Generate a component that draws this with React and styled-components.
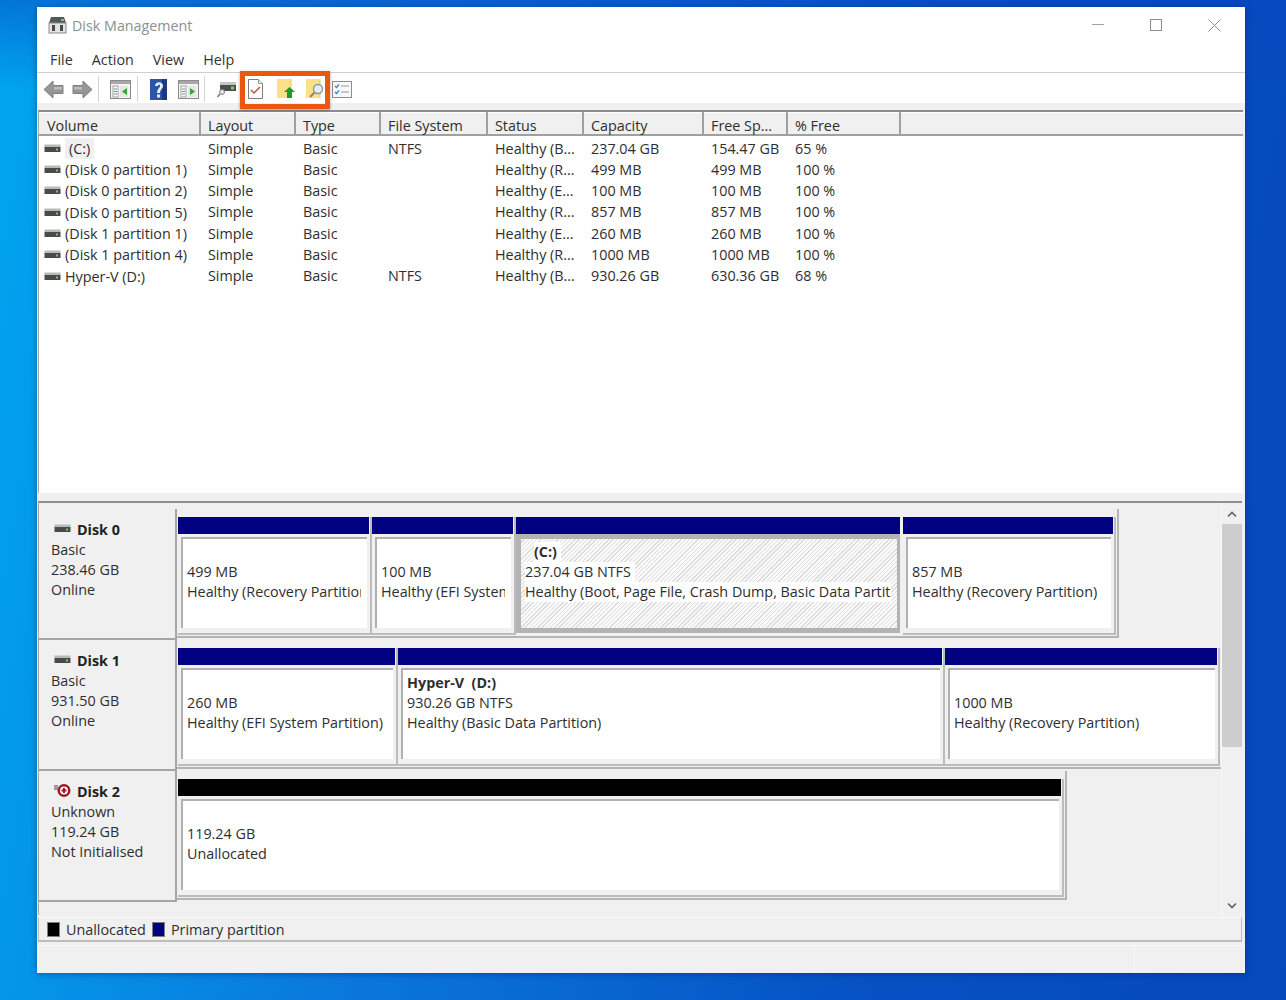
import React from 'react';
import styled, { createGlobalStyle } from 'styled-components';

const GlobalStyle = createGlobalStyle`
  html, body { margin: 0; padding: 0; }
  body { font-family: "Open Sans", "Noto Sans", "Liberation Sans", sans-serif; }
`;

const COLUMNS = '162px 95px 85px 107px 96px 120px 84px 113px';

const Desktop = styled.div`
  box-sizing: border-box;
  width: 1286px;
  height: 1000px;
  padding: 7px 41px 27px 37px;
  overflow: hidden;
  background:
    linear-gradient(180deg, rgba(5, 70, 190, 0.5) 0, rgba(5, 70, 190, 0) 90px),
    linear-gradient(100deg, #00a6f0 0%, #0a78dc 35%, #0552c4 70%, #0548bb 100%);
`;

const Window = styled.div`
  width: 1208px;
  height: 966px;
  display: flex;
  flex-direction: column;
  background: #f0f0f0;
  color: #2e2e2e;
  font-size: 14.35px;
  box-shadow: 0 1px 6px rgba(0, 30, 90, 0.45);
`;

const TitleBar = styled.div`
  height: 36px;
  flex: none;
  display: flex;
  align-items: center;
  padding-left: 11px;
  background: #fff;
`;

const Title = styled.span`
  margin-left: 5px;
  font-size: 14.3px;
  color: #8b9094;
`;

const WindowButtons = styled.div`
  margin-left: auto;
  display: flex;
  align-items: center;
  padding-right: 24px;
  gap: 46px;
`;

const MenuBar = styled.div`
  height: 26px;
  padding-top: 3px;
  flex: none;
  display: flex;
  align-items: center;
  background: #fff;
  border-bottom: 1px solid #cfcfcf;
  padding-left: 13px;
`;

const MenuItem = styled.span`
  margin-right: 19px;
  color: #333;
`;

const Toolbar = styled.div`
  position: relative;
  box-sizing: border-box;
  height: 30px;
  flex: none;
  display: flex;
  align-items: center;
  background: #fff;
  padding: 2px 0 0 6px;
`;

const ToolSlot = styled.span`
  display: flex;
  margin-left: ${({ $gap }) => $gap}px;
`;

const ToolSep = styled.span`
  width: 1px;
  height: 26px;
  background: #d4d4d4;
  margin-left: ${({ $gap }) => $gap}px;
`;

const Highlight = styled.div`
  position: absolute;
  left: 203px;
  top: -2px;
  width: 90px;
  height: 38px;
  box-sizing: border-box;
  border: 5px solid #e8590f;
  box-shadow: 0 1px 3px rgba(0, 0, 0, 0.35);
`;

const ToolStrip = styled.div`
  height: 7px;
  flex: none;
  background: #f1f0f0;
`;

const VolumePane = styled.div`
  box-sizing: border-box;
  height: 383px;
  flex: none;
  margin: 0 2px 0 1px;
  display: flex;
  flex-direction: column;
  background: #fff;
  border-top: 2px solid #8c8c8c;
  border-left: 1px solid #a8a8a8;
`;

const HeaderRow = styled.div`
  display: grid;
  grid-template-columns: ${COLUMNS};
  height: 22px;
  flex: none;
  background: #f0f0f0;
  border-bottom: 2px solid #a0a0a0;
  box-shadow: inset 0 1px 0 #fff;
`;

const HeaderCell = styled.div`
  padding: 5px 0 0 7px;
  border-right: 2px solid #a0a0a0;
  line-height: 18px;
  white-space: nowrap;

  &:first-child {
    padding-left: 8px;
  }
`;

const VolumeList = styled.div`
  flex: 1;
  padding-top: 1.5px;
`;

const VolumeRow = styled.div`
  display: grid;
  grid-template-columns: ${COLUMNS};
  height: 21.33px;
  line-height: 21px;
`;

const VolumeCell = styled.div`
  padding-left: 7px;
  white-space: nowrap;
`;

const VolumeName = styled.div`
  display: flex;
  align-items: center;
  white-space: nowrap;
  padding-left: 5px;
`;

const VolumeLabel = styled.span`
  margin-left: 4px;
  padding: 0 ${({ $selected }) => ($selected ? '4px' : '0')};
  background: ${({ $selected }) => ($selected ? '#f0f0f0' : 'transparent')};
`;

const PaneGap = styled.div`
  height: 8px;
  flex: none;
`;

const DiskPane = styled.div`
  box-sizing: border-box;
  flex: none;
  height: 414px;
  display: flex;
  margin-left: 1px;
  margin-right: 3px;
  border-top: 2px solid #8f8f8f;
  border-left: 1px solid #a8a8a8;
`;

const DiskList = styled.div`
  flex: 1;
  min-width: 0;
  overflow: hidden;
  padding-top: 6px;
`;

const DiskRow = styled.div`
  display: flex;
  height: 131px;
`;

const DiskInfo = styled.div`
  box-sizing: border-box;
  width: 138px;
  flex: none;
  padding: 11px 0 0 12px;
  line-height: 20px;
  border-right: 2px solid #a6a6a6;
  border-bottom: 2px solid #a6a6a6;
`;

const DiskName = styled.div`
  display: flex;
  align-items: center;
  font-weight: 700;
  color: #222;
`;

const DiskIconSlot = styled.span`
  display: flex;
  width: 26px;
  margin-top: -4px;
  padding-left: 3px;
  box-sizing: border-box;
`;

const DiskMap = styled.div`
  display: flex;
  flex: none;
  height: 118px;
  padding: 8px 1px 1px 1px;
  border-right: 2px solid #b4b4b4;
  border-bottom: 2px solid #b4b4b4;
`;

const Partition = styled.div`
  box-sizing: border-box;
  flex: none;
  width: ${({ $w }) => $w}px;
  height: 118px;
  display: flex;
  flex-direction: column;
  border-right: 2px solid #bcbcbc;
  border-bottom: 2px solid #bcbcbc;
`;

const SelectedPartition = styled.div`
  box-sizing: border-box;
  flex: none;
  width: ${({ $w }) => $w}px;
  height: 116px;
  display: flex;
  flex-direction: column;
  padding-right: 3px;
`;

const PartitionBar = styled.div`
  height: 17px;
  flex: none;
  margin-right: 1px;
  background: ${({ $color }) => $color};
`;

const SelectedBar = styled.div`
  height: 17px;
  flex: none;
  background: #000080;
`;

const PartitionBody = styled.div`
  flex: 1;
  min-height: 0;
  margin: 3px 3px 5px 3px;
  padding: 3px 6px 0 4px;
  background: #fff;
  border-left: 2px solid #b0b0b0;
  border-top: 2px solid #b0b0b0;
`;

const SelectedBody = styled.div`
  flex: 1;
  min-height: 0;
  padding: 3px 6px 0 4px;
  border: solid #b3b3b3;
  border-width: 5px 3px 5px 5px;
  background: repeating-linear-gradient(135deg, #fafafa 0, #fafafa 2px, #dcdcdc 2px, #dcdcdc 3px);
`;

const Line = styled.div`
  height: 20px;
  line-height: 20px;
  white-space: pre;
  overflow: hidden;
  font-weight: ${({ $bold }) => ($bold ? 700 : 400)};
  color: #2e2e2e;
`;

const SelectedLine = styled(Line)`
  width: fit-content;
  max-width: 100%;
  background: #fff;
  padding-right: 4px;
  box-sizing: border-box;
  margin-left: ${({ $indent }) => $indent || 0}px;
`;

const ScrollTrack = styled.div`
  box-sizing: border-box;
  width: 21px;
  flex: none;
  display: flex;
  flex-direction: column;
  align-items: center;
  padding-top: 8px;
  background: #f0f0f0;
  border-left: 1px solid #f8f8f8;
`;

const ScrollThumb = styled.div`
  width: 20px;
  height: 223px;
  margin-top: 6px;
  background: #cdcdcd;
`;

const ScrollDown = styled.div`
  margin-top: auto;
  margin-bottom: 6px;
  display: flex;
`;

const Legend = styled.div`
  box-sizing: border-box;
  height: 25px;
  flex: none;
  margin: 2px 3px 0 1px;
  display: flex;
  align-items: center;
  padding-left: 8px;
  border-top: 1px solid #fafafa;
  border-left: 1px solid #bdbdbd;
  border-right: 1px solid #bdbdbd;
  border-bottom: 2px solid #bdbdbd;
`;

const Swatch = styled.span`
  width: 13px;
  height: 15px;
  background: ${({ $color }) => $color};
  border: 1px solid #7f7f7f;
  box-sizing: border-box;
  margin-right: 6px;
`;

const LegendLabel = styled.span`
  margin-right: 6px;
`;

const StatusBar = styled.div`
  flex: 1;
  margin-top: 3px;
  display: flex;
  justify-content: flex-end;
  border-top: 1px solid #fafafa;
`;

const StatusCell = styled.div`
  width: 110px;
  border-left: 1px solid #f8f8f8;
`;

const volumes = [
  ['(C:)', 'Simple', 'Basic', 'NTFS', 'Healthy (B...', '237.04 GB', '154.47 GB', '65 %'],
  ['(Disk 0 partition 1)', 'Simple', 'Basic', '', 'Healthy (R...', '499 MB', '499 MB', '100 %'],
  ['(Disk 0 partition 2)', 'Simple', 'Basic', '', 'Healthy (E...', '100 MB', '100 MB', '100 %'],
  ['(Disk 0 partition 5)', 'Simple', 'Basic', '', 'Healthy (R...', '857 MB', '857 MB', '100 %'],
  ['(Disk 1 partition 1)', 'Simple', 'Basic', '', 'Healthy (E...', '260 MB', '260 MB', '100 %'],
  ['(Disk 1 partition 4)', 'Simple', 'Basic', '', 'Healthy (R...', '1000 MB', '1000 MB', '100 %'],
  ['Hyper-V (D:)', 'Simple', 'Basic', 'NTFS', 'Healthy (B...', '930.26 GB', '630.36 GB', '68 %'],
];

const headers = ['Volume', 'Layout', 'Type', 'File System', 'Status', 'Capacity', 'Free Sp...', '% Free'];

const disks = [
  {
    name: 'Disk 0',
    info: ['Basic', '238.46 GB', 'Online'],
    parts: [
      { w: 194, lines: ['', '499 MB', 'Healthy (Recovery Partition)'] },
      { w: 144, lines: ['', '100 MB', 'Healthy (EFI System Partition)'] },
      { w: 387, selected: true, lines: ['(C:)', '237.04 GB NTFS', 'Healthy (Boot, Page File, Crash Dump, Basic Data Partition)'] },
      { w: 213, lines: ['', '857 MB', 'Healthy (Recovery Partition)'] },
    ],
  },
  {
    name: 'Disk 1',
    info: ['Basic', '931.50 GB', 'Online'],
    parts: [
      { w: 220, lines: ['', '260 MB', 'Healthy (EFI System Partition)'] },
      { w: 547, lines: ['Hyper-V  (D:)', '930.26 GB NTFS', 'Healthy (Basic Data Partition)'] },
      { w: 275, lines: ['', '1000 MB', 'Healthy (Recovery Partition)'] },
    ],
  },
  {
    name: 'Disk 2',
    offline: true,
    info: ['Unknown', '119.24 GB', 'Not Initialised'],
    parts: [{ w: 886, color: '#000', lines: ['', '119.24 GB', 'Unallocated'] }],
  },
];

const DriveIcon = () => (
  <svg width="17" height="9" viewBox="0 0 17 9">
    <rect x="0.5" y="0.5" width="16" height="3" fill="#b9b9b9" />
    <rect x="0.5" y="3" width="16" height="5" fill="#4a4a4a" />
    <rect x="12" y="4.5" width="2" height="2" fill="#6fce5a" />
  </svg>
);

const OfflineDiskIcon = () => (
  <svg width="20" height="15" viewBox="0 0 20 15">
    <rect x="0" y="2" width="4" height="5" fill="#9c9c9c" />
    <circle cx="10" cy="7.5" r="6.5" fill="#a21722" />
    <circle cx="10" cy="7.5" r="4" fill="#fff" />
    <rect x="7.5" y="6.5" width="5" height="2" fill="#a21722" />
    <rect x="9" y="5" width="2" height="5" fill="#a21722" />
  </svg>
);

const AppIcon = () => (
  <svg width="19" height="18" viewBox="0 0 19 18">
    <path d="M3 1h13l2 6H1z" fill="#55585b" />
    <rect x="13" y="3" width="3" height="2" fill="#7cc96a" />
    <rect x="1" y="7" width="17" height="10" fill="#e3e3e3" stroke="#8a8a8a" />
    <rect x="4" y="9" width="3" height="6" fill="#48494b" />
    <rect x="12" y="9" width="3" height="6" fill="#48494b" />
  </svg>
);

const ArrowIcon = ({ flip }) => (
  <svg width="21" height="19" viewBox="0 0 21 19" style={flip ? { transform: 'scaleX(-1)' } : undefined}>
    <path d="M1 9.5 10 1v4.5h10v8H10V18z" fill="#969696" stroke="#808080" />
    <path d="M11 7h8v2.5h-8z" fill="#bcbcbc" />
  </svg>
);

const ConsoleIcon = ({ green }) => (
  <svg width="21" height="19" viewBox="0 0 21 19">
    <rect x="0.5" y="0.5" width="20" height="18" fill="#f4f4f4" stroke="#8a8a8a" />
    <rect x="1" y="1" width="19" height="3" fill="#a8a8a8" />
    <rect x="3" y="6" width="5" height="11" fill="#fff" stroke="#a0a0a0" />
    <path d="M4 9h3M4 11.5h3M4 14h3" stroke="#6f8fa8" />
    <rect x="10" y="6" width="8" height="11" fill="#e6e6e6" />
    <path d={green ? 'M12 8v7l5-3.5z' : 'M17 8v7l-5-3.5z'} fill="#2fa838" />
  </svg>
);

const HelpIcon = () => (
  <svg width="17" height="21" viewBox="0 0 17 21">
    <rect width="17" height="21" fill="#2a55a8" />
    <rect x="12" width="5" height="21" fill="#1b3a80" />
    <path d="M5 7c0-5 8-5 8 0 0 3-3 3-3 7H7c0-4 3-5 3-7s-2-2-2 0z" fill="#e9eff9" />
    <rect x="7" y="15.5" width="3" height="3" fill="#e9eff9" />
  </svg>
);

const DriveSearchIcon = () => (
  <svg width="20" height="18" viewBox="0 0 20 18">
    <rect x="3" y="2" width="16" height="3" fill="#c4c4c4" />
    <rect x="3" y="5" width="16" height="6" fill="#4b4d4f" />
    <rect x="14" y="6.5" width="3" height="3" fill="#7fd06a" />
    <circle cx="5" cy="12" r="2.5" fill="#dfe9f2" stroke="#7b8792" />
    <path d="M3 14 0.5 17" stroke="#8c7f6b" strokeWidth="1.6" />
  </svg>
);

const CheckDocIcon = () => (
  <svg width="15" height="20" viewBox="0 0 15 20">
    <path d="M.5.5h10l4 4v15H.5z" fill="#fff" stroke="#7d7d7d" />
    <path d="M10.5.5v4h4" fill="#eee" stroke="#9a9a9a" />
    <path d="M3 11l3 3 6-6" fill="none" stroke="#c0563a" strokeWidth="1.5" />
  </svg>
);

const FolderUpIcon = () => (
  <svg width="19" height="20" viewBox="0 0 19 20">
    <rect x="0" y="0" width="14" height="19" fill="#fbe08a" />
    <path d="M14 0v19" stroke="#e8c76a" />
    <path d="M12.5 8 18 13h-3v6h-5v-6H7z" fill="#1f9a2c" />
  </svg>
);

const FolderSearchIcon = () => (
  <svg width="19" height="20" viewBox="0 0 19 20">
    <rect x="0" y="0" width="14" height="19" fill="#fbe08a" />
    <path d="M14 0v19" stroke="#e8c76a" />
    <circle cx="12" cy="10" r="4.5" fill="#e3edf5" stroke="#8c97a2" strokeWidth="1.4" />
    <path d="M8.5 13.5 4 18" stroke="#9a8260" strokeWidth="2" />
  </svg>
);

const ChecklistIcon = () => (
  <svg width="20" height="17" viewBox="0 0 20 17">
    <rect x="0.5" y="0.5" width="19" height="16" fill="#f7f8fa" stroke="#8d8d8d" />
    <path d="M3 5l1.5 1.5L7 3.5M3 11l1.5 1.5L7 9.5" fill="none" stroke="#3b82c4" strokeWidth="1.3" />
    <path d="M9 5h8M9 11h8" stroke="#9a9a9a" />
  </svg>
);

const Chevron = ({ down }) => (
  <svg width="10" height="7" viewBox="0 0 10 7">
    <path d={down ? 'M1 1.5 5 5.5 9 1.5' : 'M1 5.5 5 1.5 9 5.5'} fill="none" stroke="#606060" strokeWidth="1.6" />
  </svg>
);

const PartitionBlock = ({ part }) =>
  part.selected ? (
    <SelectedPartition $w={part.w}>
      <SelectedBar />
      <SelectedBody>
        <SelectedLine $bold $indent={9}>{part.lines[0]}</SelectedLine>
        <SelectedLine>{part.lines[1]}</SelectedLine>
        <SelectedLine>{part.lines[2]}</SelectedLine>
      </SelectedBody>
    </SelectedPartition>
  ) : (
    <Partition $w={part.w}>
      <PartitionBar $color={part.color || '#000080'} />
      <PartitionBody>
        <Line $bold>{part.lines[0]}</Line>
        <Line>{part.lines[1]}</Line>
        <Line>{part.lines[2]}</Line>
      </PartitionBody>
    </Partition>
  );

const App = () => (
  <>
    <GlobalStyle />
    <Desktop>
      <Window>
        <TitleBar>
          <AppIcon />
          <Title>Disk Management</Title>
          <WindowButtons>
            <svg width="12" height="12" viewBox="0 0 12 12">
              <path d="M0 5.5h12" stroke="#a0a0a0" />
            </svg>
            <svg width="12" height="12" viewBox="0 0 12 12">
              <rect x="0.5" y="0.5" width="11" height="11" fill="none" stroke="#8d8d8d" />
            </svg>
            <svg width="13" height="13" viewBox="0 0 13 13">
              <path d="M.5.5l12 12M12.5.5l-12 12" stroke="#8d8d8d" />
            </svg>
          </WindowButtons>
        </TitleBar>
        <MenuBar>
          {['File', 'Action', 'View', 'Help'].map((item) => (
            <MenuItem key={item}>{item}</MenuItem>
          ))}
        </MenuBar>
        <Toolbar>
          <ArrowIcon />
          <ToolSlot $gap={8}><ArrowIcon flip /></ToolSlot>
          <ToolSep $gap={5} />
          <ToolSlot $gap={11}><ConsoleIcon /></ToolSlot>
          <ToolSep $gap={6} />
          <ToolSlot $gap={12}><HelpIcon /></ToolSlot>
          <ToolSlot $gap={11}><ConsoleIcon green /></ToolSlot>
          <ToolSep $gap={5} />
          <ToolSlot $gap={12}><DriveSearchIcon /></ToolSlot>
          <ToolSlot $gap={11}><CheckDocIcon /></ToolSlot>
          <ToolSlot $gap={14}><FolderUpIcon /></ToolSlot>
          <ToolSlot $gap={10}><FolderSearchIcon /></ToolSlot>
          <ToolSlot $gap={7}><ChecklistIcon /></ToolSlot>
          <Highlight />
        </Toolbar>
        <ToolStrip />
        <VolumePane>
          <HeaderRow>
            {headers.map((h) => (
              <HeaderCell key={h}>{h}</HeaderCell>
            ))}
          </HeaderRow>
          <VolumeList>
            {volumes.map(([name, ...rest], i) => (
              <VolumeRow key={name}>
                <VolumeName>
                  <DriveIcon />
                  <VolumeLabel $selected={i === 0}>{name}</VolumeLabel>
                </VolumeName>
                {rest.map((value, j) => (
                  <VolumeCell key={j}>{value}</VolumeCell>
                ))}
              </VolumeRow>
            ))}
          </VolumeList>
        </VolumePane>
        <PaneGap />
        <DiskPane>
          <DiskList>
            {disks.map((disk) => (
              <DiskRow key={disk.name}>
                <DiskInfo>
                  <DiskName>
                    <DiskIconSlot>{disk.offline ? <OfflineDiskIcon /> : <DriveIcon />}</DiskIconSlot>
                    {disk.name}
                  </DiskName>
                  {disk.info.map((line) => (
                    <div key={line}>{line}</div>
                  ))}
                </DiskInfo>
                <DiskMap>
                  {disk.parts.map((part) => (
                    <PartitionBlock key={part.w} part={part} />
                  ))}
                </DiskMap>
              </DiskRow>
            ))}
          </DiskList>
          <ScrollTrack>
            <Chevron />
            <ScrollThumb />
            <ScrollDown><Chevron down /></ScrollDown>
          </ScrollTrack>
        </DiskPane>
        <Legend>
          <Swatch $color="#000" />
          <LegendLabel>Unallocated</LegendLabel>
          <Swatch $color="#000080" />
          <LegendLabel>Primary partition</LegendLabel>
        </Legend>
        <StatusBar>
          <StatusCell />
        </StatusBar>
      </Window>
    </Desktop>
  </>
);

export default App;
